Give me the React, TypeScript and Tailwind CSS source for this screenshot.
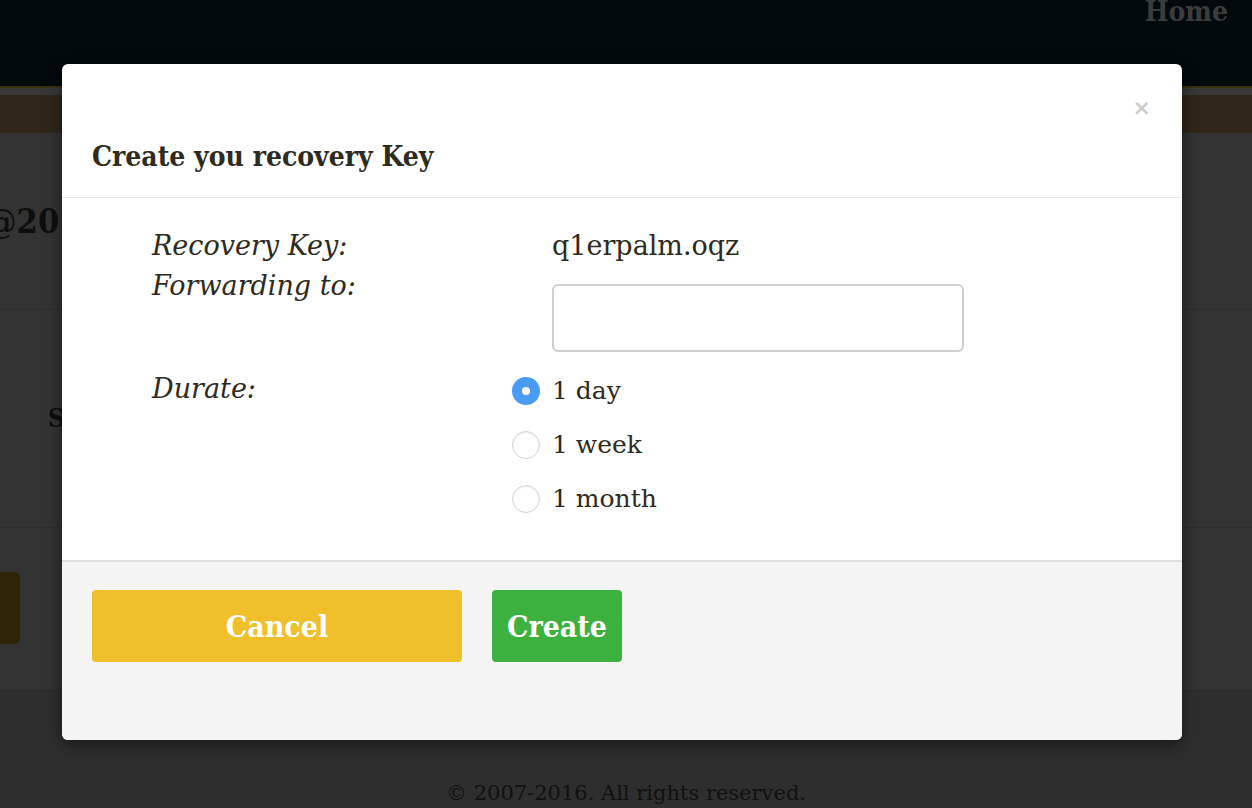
import { useState } from "react";

const slab = "font-['DejaVu_Serif',serif] [font-stretch:condensed]";
const body = "font-['DejaVu_Serif',serif]";

const durations = ["1 day", "1 week", "1 month"];

function Radio({ checked }: { checked: boolean }) {
  return checked ? (
    <span className="flex h-[28px] w-[28px] items-center justify-center rounded-full bg-[#4a9bf5]">
      <span className="h-[8px] w-[8px] rounded-full bg-white" />
    </span>
  ) : (
    <span className="h-[28px] w-[28px] rounded-full border border-[#d4d4d4] bg-white shadow-[inset_0_1px_2px_rgba(0,0,0,0.08)]" />
  );
}

export default function App() {
  const [duration, setDuration] = useState("1 day");

  return (
    <div className="relative h-[808px] w-[1252px] overflow-hidden bg-[#2f2f2f]">
      {/* page behind the overlay */}
      <header className="flex h-[86px] justify-end bg-[#020a0e] pr-[24px]">
        <span className={`${slab} -mt-[8px] text-[28px] font-bold leading-[40px] text-[#3c3c3c]`}>Home</span>
      </header>
      <div className="h-[2px] bg-[#3b300f]" />
      <div className="h-[7px] bg-[#383838]" />
      <div className="h-[38px] bg-[#30251a]" />
      <div className="bg-[#333333]">
        <div className="flex h-[177px] items-center border-b border-[#2d2d2d]">
          <span className={`${slab} -ml-[14px] text-[34px] font-bold text-[#0e0e0e]`}>@2016</span>
        </div>
        <div className="flex h-[218px] items-center border-b border-[#2d2d2d] pl-[48px]">
          <span className={`${slab} text-[26px] font-bold text-[#0e0e0e]`}>S</span>
        </div>
        <div className="flex h-[162px] items-start border-b border-[#2d2d2d] pt-[44px]">
          <span className="-ml-[10px] h-[72px] w-[30px] rounded-[5px] bg-[#2e2507]" />
        </div>
      </div>
      <footer className="flex h-[120px] justify-center bg-[#2e2e2e] pt-[88px]">
        <span className={`${body} text-[21px] text-[#111111]`}>© 2007-2016. All rights reserved.</span>
      </footer>

      {/* modal */}
      <div className="absolute left-[62px] top-[64px] flex h-[676px] w-[1120px] flex-col overflow-hidden rounded-[6px] bg-white shadow-[0_4px_16px_rgba(0,0,0,0.5)]">
        <div className="relative flex h-[134px] shrink-0 items-end border-b border-[#e8e8e8] px-[30px] pb-[20px]">
          <h2 className={`${slab} text-[28px] font-bold leading-[40px] text-[#2e2a20]`}>Create you recovery Key</h2>
          <button type="button" className="absolute right-[31px] top-[27px] font-['DejaVu_Sans',sans-serif] text-[22px] font-bold text-[#cccccc]">
            ×
          </button>
        </div>

        <div className={`${body} flex-1 pl-[90px] pt-[28px] text-[#2e2a20]`}>
          <div className="flex">
            <div className="w-[400px] text-[27px] italic leading-[40px]">
              <div>Recovery Key:</div>
              <div>Forwarding to:</div>
            </div>
            <div className="flex flex-col">
              <div className="text-[27px] leading-[40px]">q1erpalm.oqz</div>
              <input className="mt-[18px] h-[68px] w-[412px] rounded-[6px] border-2 border-[#cfcfcf] px-3 text-[22px] outline-none" />
            </div>
          </div>
          <div className="mt-[17px] flex">
            <div className="w-[360px] text-[27px] italic leading-[40px]">Durate:</div>
            <div className="mt-[2px] flex flex-col gap-[14px]">
              {durations.map((d) => (
                <label key={d} className="flex cursor-pointer items-center gap-[12px]" onClick={() => setDuration(d)}>
                  <Radio checked={duration === d} />
                  <span className="text-[25px] leading-[40px]">{d}</span>
                </label>
              ))}
            </div>
          </div>
        </div>

        <div className="h-[180px] shrink-0 border-t-2 border-[#dedede] bg-[#f4f4f4] px-[30px] pt-[28px]">
          <div className={`${slab} flex gap-[30px] text-[30px] font-bold text-white`}>
            <button type="button" className="h-[72px] w-[370px] rounded-[4px] bg-[#efbf2c]">Cancel</button>
            <button type="button" className="h-[72px] w-[130px] rounded-[4px] bg-[#3db13f]">Create</button>
          </div>
        </div>
      </div>
    </div>
  );
}
